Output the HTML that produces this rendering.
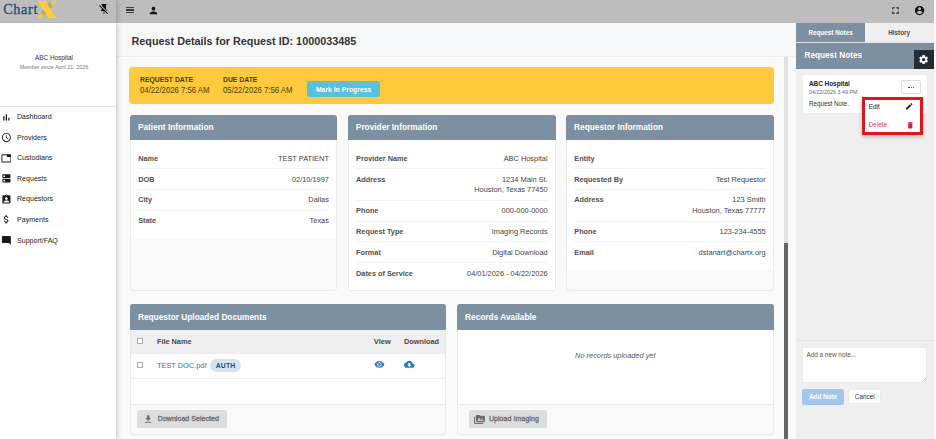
<!DOCTYPE html>
<html lang="en">
<head>
<meta charset="utf-8">
<title>ChartX - Request Details</title>
<style>
*{box-sizing:border-box;margin:0;padding:0}
html,body{width:936px;height:439px;overflow:hidden;background:#fff}
body{font-family:"Liberation Sans",sans-serif;color:#333;position:relative;font-size:8px}
.abs{position:absolute}
.t{white-space:nowrap;line-height:1}
#topbar{left:0;top:0;width:934px;height:22.8px;background:#bdbdbd}
#sidebar{left:0;top:22.8px;width:116px;height:416.2px;background:#fff;box-shadow:1px 0 5px rgba(0,0,0,.24);clip-path:inset(0 -10px 0 0)}
#sidehead{left:0;top:0;width:116px;height:22.8px;background:#bdbdbd;box-shadow:1px 0 5px rgba(0,0,0,.24);clip-path:inset(0 -10px 0 0)}
#main{left:116px;top:23px;width:680px;height:416px;background:#fafafa}
.card{background:#f9f9f9;border:1px solid #e9ebed;border-radius:3px}
.chead{left:-1px;top:-1px;right:-1px;background:#7d90a1;border-radius:3px 3px 0 0}
.white{background:#fff}

</style>
</head>
<body>
<div class="abs" id="topbar"></div>
<div class="abs" id="main"></div>
<div class="abs" style="left:116px;top:23px;width:680px;height:33.4px;background:#f7f8fa;"></div>
<div class="abs" style="left:116px;top:56.2px;width:680px;height:1px;background:#eceef0;"></div>
<div class="abs" id="sidebar"></div>
<div class="abs" id="sidehead"></div>
<div class="abs t" style="top:2px;font-size:14.3px;color:#1f506d;font-family:'Liberation Serif',serif;left:3.2px;letter-spacing:0.62px;-webkit-text-stroke:0.3px #1f506d;">Chart</div>
<svg class="abs" style="left:30px;top:0" width="40" height="22" viewBox="0 0 40 22"><defs><linearGradient id="xg" gradientUnits="userSpaceOnUse" x1="-0.3" y1="-2.58" x2="16.76" y2="-13.02"><stop offset="0" stop-color="#ffcb3d"/><stop offset=".08" stop-color="#ffcb3d"/><stop offset=".36" stop-color="#8f9c98"/><stop offset=".64" stop-color="#8f9c98"/><stop offset=".92" stop-color="#ffcb3d"/><stop offset="1" stop-color="#ffcb3d"/></linearGradient></defs><text x="0" y="0" transform="translate(8.25,17.2) scale(1.065,1)" font-family="DejaVu Sans, Liberation Sans, sans-serif" font-weight="bold" font-size="21" fill="url(#xg)" stroke="url(#xg)" stroke-width="1.5" text-rendering="geometricPrecision">X</text></svg>
<div class="abs" style="left:43.1px;top:1px;width:7.8px;height:16.8px;background:#ffcb3d;transform:skewX(34.2deg)"></div>
<svg class="abs" style="left:97.9px;top:2.9px" width="12" height="12" viewBox="0 0 24 24"><path fill="#111" d="M2,5.27L3.28,4L20,20.72L18.73,22L12.8,16.07V22H11.2V16H6V14L8,12V11.27L2,5.27M16,12L18,14V16H17.82L8,6.18V4H7V2H17V4H16V12Z"/></svg>
<div class="abs" style="left:125.9px;top:6.9px;width:8.2px;height:1.2px;background:#3c3c3c;"></div>
<div class="abs" style="left:125.9px;top:9.36px;width:8.2px;height:1.2px;background:#3c3c3c;"></div>
<div class="abs" style="left:125.9px;top:11.82px;width:8.2px;height:1.2px;background:#3c3c3c;"></div>
<svg class="abs" style="left:147.55px;top:4.7px" width="11" height="11" viewBox="0 0 24 24"><path fill="#111" d="M12 12c2.21 0 4-1.79 4-4s-1.79-4-4-4-4 1.79-4 4 1.79 4 4 4zm0 2c-2.67 0-8 1.34-8 4v2h16v-2c0-2.66-5.33-4-8-4z"/></svg>
<svg class="abs" style="left:890px;top:5.0px" width="11" height="11" viewBox="0 0 24 24"><path fill="#111" d="M7 14H5v5h5v-2H7v-3zm-2-4h2V7h3V5H5v5zm12 7h-3v2h5v-5h-2v3zM14 5v2h3v3h2V5h-5z"/></svg>
<svg class="abs" style="left:913.5px;top:4.7px" width="11.2" height="11.2" viewBox="0 0 24 24"><path fill="#111" d="M12 2C6.48 2 2 6.48 2 12s4.48 10 10 10 10-4.48 10-10S17.52 2 12 2zm0 3c1.66 0 3 1.34 3 3s-1.34 3-3 3-3-1.34-3-3 1.34-3 3-3zm0 14.2c-2.5 0-4.71-1.28-6-3.22.03-1.99 4-3.08 6-3.08 1.99 0 5.97 1.09 6 3.08-1.29 1.94-3.5 3.22-6 3.22z"/></svg>
<div class="abs t" style="top:55px;font-size:6.76px;color:#333;left:-146px;width:400px;text-align:center;transform:scaleX(0.945);transform-origin:50% 50%;">ABC Hospital</div>
<div class="abs t" style="top:65px;font-size:5.74px;color:#777;left:-146px;width:400px;text-align:center;transform:scaleX(0.945);transform-origin:50% 50%;">Member since April 21, 2026</div>
<div class="abs" style="left:0px;top:105.7px;width:116px;height:1px;background:#e4e4e4;"></div>
<div class="abs t" style="top:113px;font-size:7.52px;color:#222;left:16.8px;transform:scaleX(0.94);transform-origin:0 50%;">Dashboard</div>
<svg class="abs" style="left:0.5px;top:111.5px" width="10.8" height="10.8" viewBox="0 0 24 24"><path fill="#1a1a1a" d="M5 9.2h3V19H5V9.2zM10.6 5h2.8v14h-2.8V5zm5.6 8H19v6h-2.8v-6z"/></svg>
<div class="abs t" style="top:134px;font-size:7.52px;color:#222;left:16.8px;transform:scaleX(0.94);transform-origin:0 50%;">Providers</div>
<svg class="abs" style="left:0.5px;top:132.08px" width="10.8" height="10.8" viewBox="0 0 24 24"><path fill="#1a1a1a" d="M11.99 2C6.47 2 2 6.48 2 12s4.47 10 9.99 10C17.52 22 22 17.52 22 12S17.52 2 11.99 2zM12 20c-4.42 0-8-3.58-8-8s3.58-8 8-8 8 3.58 8 8-3.58 8-8 8zm.5-13H11v6l5.25 3.15.75-1.23-4.5-2.67z"/></svg>
<div class="abs t" style="top:154px;font-size:7.52px;color:#222;left:16.8px;transform:scaleX(0.94);transform-origin:0 50%;">Custodians</div>
<svg class="abs" style="left:0.5px;top:152.66px" width="10.8" height="10.8" viewBox="0 0 24 24"><path fill="#1a1a1a" d="M21 3H3c-1.1 0-2 .9-2 2v14c0 1.1.9 2 2 2h18c1.1 0 2-.9 2-2V5c0-1.1-.9-2-2-2zm0 16H3V5h10v4h8v10z"/></svg>
<div class="abs t" style="top:175px;font-size:7.52px;color:#222;left:16.8px;transform:scaleX(0.94);transform-origin:0 50%;">Requests</div>
<svg class="abs" style="left:0.5px;top:173.24px" width="10.8" height="10.8" viewBox="0 0 24 24"><path fill="#1a1a1a" d="M20 13H4c-.55 0-1 .45-1 1v6c0 .55.45 1 1 1h16c.55 0 1-.45 1-1v-6c0-.55-.45-1-1-1zM7 19c-1.1 0-2-.9-2-2s.9-2 2-2 2 .9 2 2-.9 2-2 2zM20 3H4c-.55 0-1 .45-1 1v6c0 .55.45 1 1 1h16c.55 0 1-.45 1-1V4c0-.55-.45-1-1-1zM7 9c-1.1 0-2-.9-2-2s.9-2 2-2 2 .9 2 2-.9 2-2 2z"/></svg>
<div class="abs t" style="top:195px;font-size:7.52px;color:#222;left:16.8px;transform:scaleX(0.94);transform-origin:0 50%;">Requestors</div>
<svg class="abs" style="left:0.5px;top:193.82px" width="10.8" height="10.8" viewBox="0 0 24 24"><path fill="#1a1a1a" d="M19 3h-4.18C14.4 1.84 13.3 1 12 1c-1.3 0-2.4.84-2.82 2H5c-1.1 0-2 .9-2 2v14c0 1.1.9 2 2 2h14c1.1 0 2-.9 2-2V5c0-1.1-.9-2-2-2zm-7 0c.55 0 1 .45 1 1s-.45 1-1 1-1-.45-1-1 .45-1 1-1zm0 4c1.66 0 3 1.34 3 3s-1.34 3-3 3-3-1.34-3-3 1.34-3 3-3zm6 12H6v-1.4c0-2 4-3.1 6-3.1s6 1.1 6 3.1V19z"/></svg>
<div class="abs t" style="top:216px;font-size:7.52px;color:#222;left:16.8px;transform:scaleX(0.94);transform-origin:0 50%;">Payments</div>
<svg class="abs" style="left:0.5px;top:214.4px" width="10.8" height="10.8" viewBox="0 0 24 24"><path fill="#1a1a1a" d="M11.8 10.9c-2.27-.59-3-1.2-3-2.15 0-1.09 1.01-1.85 2.7-1.85 1.78 0 2.44.85 2.5 2.1h2.21c-.07-1.72-1.12-3.3-3.21-3.81V3h-3v2.16c-1.94.42-3.5 1.68-3.5 3.61 0 2.31 1.91 3.46 4.7 4.13 2.5.6 3 1.48 3 2.41 0 .69-.49 1.79-2.7 1.79-2.06 0-2.87-.92-2.98-2.1h-2.2c.12 2.19 1.76 3.42 3.68 3.83V21h3v-2.15c1.95-.37 3.5-1.5 3.5-3.55 0-2.84-2.43-3.81-4.7-4.4z"/></svg>
<div class="abs t" style="top:237px;font-size:7.52px;color:#222;left:16.8px;transform:scaleX(0.94);transform-origin:0 50%;">Support/FAQ</div>
<svg class="abs" style="left:0.5px;top:234.98px" width="10.8" height="10.8" viewBox="0 0 24 24"><path fill="#1a1a1a" d="M21.99 4c0-1.1-.89-2-1.99-2H4c-1.1 0-2 .9-2 2v12c0 1.1.9 2 2 2h14l4 4-.01-18z"/></svg>
<div class="abs t" style="top:36px;font-size:10.82px;color:#353535;font-weight:bold;left:131.5px;">Request Details for Request ID: 1000033485</div>
<div class="abs" style="left:783.9px;top:57.2px;width:3.9px;height:382px;background:#e2e2e2;"></div>
<div class="abs" style="left:783.9px;top:242.7px;width:3.9px;height:197px;background:#666;"></div>
<div class="abs" style="left:129.1px;top:66.85px;width:645px;height:36.9px;background:#ffca3e;border-radius:3px"></div>
<div class="abs t" style="top:76px;font-size:7.51px;color:#4a3a08;font-weight:bold;left:139.7px;transform:scaleX(0.91);transform-origin:0 50%;">REQUEST DATE</div>
<div class="abs t" style="top:86px;font-size:8.94px;color:#4a3a08;left:139.7px;transform:scaleX(0.87);transform-origin:0 50%;">04/22/2026 7:56 AM</div>
<div class="abs t" style="top:76px;font-size:7.51px;color:#4a3a08;font-weight:bold;left:223px;transform:scaleX(0.91);transform-origin:0 50%;">DUE DATE</div>
<div class="abs t" style="top:86px;font-size:8.94px;color:#4a3a08;left:223px;transform:scaleX(0.87);transform-origin:0 50%;">05/22/2026 7:56 AM</div>
<div class="abs" style="left:306.7px;top:80.9px;width:73.5px;height:15.9px;background:#5bc0de;border-radius:2px"></div>
<div class="abs t" style="top:87px;font-size:6.83px;color:#fff;font-weight:bold;left:143.6px;width:400px;text-align:center;">Mark In Progress</div>
<div class="abs card" style="left:129.9px;top:114.5px;width:207.2px;height:176.9px"><div class="abs white" style="left:0;right:0;top:24.5px;height:98.9px;"></div><div class="abs chead" style="height:25.5px"></div></div>
<div class="abs t" style="top:123px;font-size:8.3px;color:#fff;font-weight:bold;left:137.95000000000002px;">Patient Information</div>
<div class="abs card" style="left:347.8px;top:114.5px;width:208px;height:176.9px"><div class="abs white" style="left:0;right:0;top:24.5px;height:150.4px;border-radius:0 0 2px 2px;"></div><div class="abs chead" style="height:25.5px"></div></div>
<div class="abs t" style="top:123px;font-size:8.3px;color:#fff;font-weight:bold;left:355.85px;">Provider Information</div>
<div class="abs card" style="left:566px;top:114.5px;width:207.7px;height:176.9px"><div class="abs white" style="left:0;right:0;top:24.5px;height:130.3px;"></div><div class="abs chead" style="height:25.5px"></div></div>
<div class="abs t" style="top:123px;font-size:8.3px;color:#fff;font-weight:bold;left:574.05px;">Requestor Information</div>
<div class="abs t" style="top:155px;font-size:7.3px;color:#505050;font-weight:bold;left:138.2px;">Name</div>
<div class="abs t" style="top:155px;font-size:7.4px;color:#444;right:607.1px;">TEST PATIENT</div>
<div class="abs" style="left:138.2px;top:168.1px;width:190.7px;height:1px;background:#f2f3f4;"></div>
<div class="abs t" style="top:176px;font-size:7.3px;color:#505050;font-weight:bold;left:138.2px;">DOB</div>
<div class="abs t" style="top:176px;font-size:7.4px;color:#444;right:607.1px;">02/10/1997</div>
<div class="abs" style="left:138.2px;top:188.9px;width:190.7px;height:1px;background:#f2f3f4;"></div>
<div class="abs t" style="top:196px;font-size:7.3px;color:#505050;font-weight:bold;left:138.2px;">City</div>
<div class="abs t" style="top:196px;font-size:7.4px;color:#444;right:607.1px;">Dallas</div>
<div class="abs" style="left:138.2px;top:209.7px;width:190.7px;height:1px;background:#f2f3f4;"></div>
<div class="abs t" style="top:217px;font-size:7.3px;color:#505050;font-weight:bold;left:138.2px;">State</div>
<div class="abs t" style="top:217px;font-size:7.4px;color:#444;right:607.1px;">Texas</div>
<div class="abs t" style="top:155px;font-size:7.3px;color:#505050;font-weight:bold;left:356.1px;">Provider Name</div>
<div class="abs t" style="top:155px;font-size:7.4px;color:#444;right:388.4px;">ABC Hospital</div>
<div class="abs" style="left:356.1px;top:168.1px;width:191.5px;height:1px;background:#f2f3f4;"></div>
<div class="abs t" style="top:176px;font-size:7.3px;color:#505050;font-weight:bold;left:356.1px;">Address</div>
<div class="abs t" style="top:176px;font-size:7.4px;color:#444;right:388.4px;">1234 Main St.</div>
<div class="abs t" style="top:186px;font-size:7.4px;color:#444;right:388.4px;">Houston, Texas 77450</div>
<div class="abs" style="left:356.1px;top:199.7px;width:191.5px;height:1px;background:#f2f3f4;"></div>
<div class="abs t" style="top:207px;font-size:7.3px;color:#505050;font-weight:bold;left:356.1px;">Phone</div>
<div class="abs t" style="top:207px;font-size:7.4px;color:#444;right:388.4px;">000-000-0000</div>
<div class="abs" style="left:356.1px;top:220.5px;width:191.5px;height:1px;background:#f2f3f4;"></div>
<div class="abs t" style="top:228px;font-size:7.3px;color:#505050;font-weight:bold;left:356.1px;">Request Type</div>
<div class="abs t" style="top:228px;font-size:7.4px;color:#444;right:388.4px;">Imaging Records</div>
<div class="abs" style="left:356.1px;top:241.3px;width:191.5px;height:1px;background:#f2f3f4;"></div>
<div class="abs t" style="top:249px;font-size:7.3px;color:#505050;font-weight:bold;left:356.1px;">Format</div>
<div class="abs t" style="top:249px;font-size:7.4px;color:#444;right:388.4px;">Digital Download</div>
<div class="abs" style="left:356.1px;top:262.1px;width:191.5px;height:1px;background:#f2f3f4;"></div>
<div class="abs t" style="top:270px;font-size:7.3px;color:#505050;font-weight:bold;left:356.1px;">Dates of Service</div>
<div class="abs t" style="top:270px;font-size:7.4px;color:#444;right:388.4px;">04/01/2026 - 04/22/2026</div>
<div class="abs t" style="top:155px;font-size:7.3px;color:#505050;font-weight:bold;left:574.3px;">Entity</div>
<div class="abs" style="left:574.3px;top:168.1px;width:191.30000000000007px;height:1px;background:#f2f3f4;"></div>
<div class="abs t" style="top:176px;font-size:7.3px;color:#505050;font-weight:bold;left:574.3px;">Requested By</div>
<div class="abs t" style="top:176px;font-size:7.4px;color:#444;right:170.4px;">Test Requestor</div>
<div class="abs" style="left:574.3px;top:188.9px;width:191.30000000000007px;height:1px;background:#f2f3f4;"></div>
<div class="abs t" style="top:196px;font-size:7.3px;color:#505050;font-weight:bold;left:574.3px;">Address</div>
<div class="abs t" style="top:196px;font-size:7.4px;color:#444;right:170.4px;">123 Smith</div>
<div class="abs t" style="top:207px;font-size:7.4px;color:#444;right:170.4px;">Houston, Texas 77777</div>
<div class="abs" style="left:574.3px;top:220.5px;width:191.30000000000007px;height:1px;background:#f2f3f4;"></div>
<div class="abs t" style="top:228px;font-size:7.3px;color:#505050;font-weight:bold;left:574.3px;">Phone</div>
<div class="abs t" style="top:228px;font-size:7.4px;color:#444;right:170.4px;">123-234-4555</div>
<div class="abs" style="left:574.3px;top:241.3px;width:191.30000000000007px;height:1px;background:#f2f3f4;"></div>
<div class="abs t" style="top:249px;font-size:7.3px;color:#505050;font-weight:bold;left:574.3px;">Email</div>
<div class="abs t" style="top:249px;font-size:7.4px;color:#444;right:170.4px;">dstanart@chartx.org</div>
<div class="abs card" style="left:129.9px;top:304.3px;width:316.3px;height:130.6px"><div class="abs white" style="left:0;right:0;top:24.9px;height:0px;"></div><div class="abs chead" style="height:25.9px"></div></div>
<div class="abs t" style="top:313px;font-size:8.3px;color:#fff;font-weight:bold;left:137.95000000000002px;">Requestor Uploaded Documents</div>
<div class="abs" style="left:130.9px;top:330.2px;width:314.3px;height:23.6px;background:#efefef;"></div>
<div class="abs" style="left:130.9px;top:353.8px;width:314.3px;height:50.3px;background:#fff;"></div>
<div class="abs" style="left:130.9px;top:378px;width:314.3px;height:1px;background:#eef0f1;"></div>
<div class="abs" style="left:130.9px;top:404.1px;width:314.3px;height:1px;background:#e9e9ec;"></div>
<div class="abs" style="left:137px;top:338.4px;width:6px;height:6px;background:#fff;border:0.8px solid #ababab;border-radius:0.5px"></div>
<div class="abs" style="left:137px;top:362.4px;width:6px;height:6px;background:#fff;border:0.8px solid #ababab;border-radius:0.5px"></div>
<div class="abs t" style="top:338px;font-size:7.3px;color:#484848;font-weight:bold;left:157px;">File Name</div>
<div class="abs t" style="top:338px;font-size:7.52px;color:#484848;font-weight:bold;left:373.8px;">View</div>
<div class="abs t" style="top:338px;font-size:7.33px;color:#484848;font-weight:bold;left:404px;">Download</div>
<div class="abs t" style="top:362px;font-size:7.38px;color:#2f73b5;left:157px;">TEST DOC.pdf</div>
<div class="abs" style="left:210px;top:359.2px;width:31.2px;height:12.9px;background:#d5e3f1;border-radius:7px"></div>
<div class="abs t" style="top:363px;font-size:6.8px;color:#1f4e79;font-weight:bold;letter-spacing:0.03em;left:25.6px;width:400px;text-align:center;">AUTH</div>
<svg class="abs" style="left:373.9px;top:359.3px" width="10.8" height="10.8" viewBox="0 0 24 24"><path fill="#2b77c2" d="M12 4.5C7 4.5 2.73 7.61 1 12c1.73 4.39 6 7.5 11 7.5s9.27-3.11 11-7.5c-1.73-4.39-6-7.5-11-7.5zM12 17c-2.76 0-5-2.24-5-5s2.24-5 5-5 5 2.24 5 5-2.24 5-5 5zm0-8c-1.66 0-3 1.34-3 3s1.34 3 3 3 3-1.34 3-3-1.34-3-3-3z"/></svg>
<svg class="abs" style="left:404.2px;top:358.8px" width="10.6" height="10.6" viewBox="0 0 24 24"><path fill="#2b77c2" d="M19.35 10.04C18.67 6.59 15.64 4 12 4 9.11 4 6.6 5.64 5.35 8.04 2.34 8.36 0 10.91 0 14c0 3.31 2.69 6 6 6h13c2.76 0 5-2.24 5-5 0-2.64-2.05-4.78-4.65-4.96zM17 13l-5 5-5-5h3V9h4v4h3z"/></svg>
<div class="abs" style="left:137.4px;top:410.2px;width:89.6px;height:17.8px;background:#dcdddd;border-radius:2px"></div>
<svg class="abs" style="left:143.2px;top:413.9px" width="10.4" height="10.4" viewBox="0 0 24 24"><path fill="#727272" d="M19 9h-4V3H9v6H5l7 7 7-7zM5 18v2h14v-2H5z"/></svg>
<div class="abs t" style="top:416px;font-size:6.96px;color:#727272;letter-spacing:0.01em;left:157.8px;-webkit-text-stroke:0.35px #727272;">Download Selected</div>
<div class="abs card" style="left:457px;top:304.3px;width:316.7px;height:130.6px"><div class="abs white" style="left:0;right:0;top:24.9px;height:0px;"></div><div class="abs chead" style="height:25.9px"></div></div>
<div class="abs t" style="top:313px;font-size:8.3px;color:#fff;font-weight:bold;left:465.05px;">Records Available</div>
<div class="abs" style="left:458px;top:330.2px;width:314.7px;height:73.9px;background:#fff;"></div>
<div class="abs" style="left:458px;top:404.1px;width:314.7px;height:1px;background:#e9e9ec;"></div>
<div class="abs t" style="top:352px;font-size:7.38px;color:#595959;font-style:italic;left:415.3px;width:400px;text-align:center;">No records uploaded yet</div>
<div class="abs" style="left:468.6px;top:410.2px;width:78.5px;height:17.7px;background:#dcdddd;border-radius:2px"></div>
<svg class="abs" style="left:474px;top:413.7px" width="10.9" height="10.9" viewBox="0 0 24 24"><path fill="#6e6e6e" d="M2 6H0v5h.01L0 20c0 1.1.9 2 2 2h18v-2H2V6zm20-2h-8l-2-2H6c-1.1 0-1.99.9-1.99 2L4 16c0 1.1.9 2 2 2h16c1.1 0 2-.9 2-2V6c0-1.1-.9-2-2-2zM7 15l4.5-6 3.5 4.51 2.5-3.01L21 15H7z"/></svg>
<div class="abs t" style="top:415px;font-size:7.0px;color:#727272;letter-spacing:0.01em;left:488.9px;-webkit-text-stroke:0.35px #727272;">Upload Imaging</div>
<div class="abs" style="left:796.1px;top:22.8px;width:137.6px;height:416.2px;background:#efefef;"></div>
<div class="abs" style="left:933.7px;top:0px;width:2.3px;height:439px;background:#fdf8fb;"></div>
<div class="abs" style="left:796.1px;top:22.8px;width:69px;height:19.3px;background:#7d90a1;"></div>
<div class="abs" style="left:796.1px;top:42.1px;width:137.6px;height:1px;background:#e3e6e9;"></div>
<div class="abs t" style="top:30px;font-size:6.34px;color:#fff;font-weight:bold;left:630.6px;width:400px;text-align:center;">Request Notes</div>
<div class="abs t" style="top:30px;font-size:6.3px;color:#4a4a4a;font-weight:bold;left:699.1px;width:400px;text-align:center;">History</div>
<div class="abs" style="left:796.1px;top:43.1px;width:137.6px;height:25.8px;background:#7d90a1;"></div>
<div class="abs t" style="top:52px;font-size:8.23px;color:#fff;font-weight:bold;left:804.5px;">Request Notes</div>
<div class="abs" style="left:914px;top:50px;width:19.7px;height:18.9px;background:#252b33;"></div>
<svg class="abs" style="left:917.8px;top:53.9px" width="11.2" height="11.2" viewBox="0 0 24 24"><path fill="#fff" d="M19.14 12.94c.04-.3.06-.61.06-.94 0-.32-.02-.64-.07-.94l2.03-1.58c.18-.14.23-.41.12-.61l-1.92-3.32c-.12-.22-.37-.29-.59-.22l-2.39.96c-.5-.38-1.03-.7-1.62-.94l-.36-2.54c-.04-.24-.24-.41-.48-.41h-3.84c-.24 0-.43.17-.47.41l-.36 2.54c-.59.24-1.13.57-1.62.94l-2.39-.96c-.22-.08-.47 0-.59.22L2.74 8.87c-.12.21-.08.47.12.61l2.03 1.58c-.05.3-.09.63-.09.94s.02.64.07.94l-2.03 1.58c-.18.14-.23.41-.12.61l1.92 3.32c.12.22.37.29.59.22l2.39-.96c.5.38 1.03.7 1.62.94l.36 2.54c.05.24.24.41.48.41h3.84c.24 0 .44-.17.47-.41l.36-2.54c.59-.24 1.13-.56 1.62-.94l2.39.96c.22.08.47 0 .59-.22l1.92-3.32c.12-.22.07-.47-.12-.61l-2.01-1.58zM12 15.6c-1.98 0-3.6-1.62-3.6-3.6s1.62-3.6 3.6-3.6 3.6 1.62 3.6 3.6-1.62 3.6-3.6 3.6z"/></svg>
<div class="abs" style="left:802.7px;top:75.1px;width:124.3px;height:37.9px;background:#fff;border-radius:2px"></div>
<div class="abs t" style="top:81px;font-size:6.42px;color:#222;font-weight:bold;left:808.9px;">ABC Hospital</div>
<div class="abs t" style="top:90px;font-size:5.41px;color:#5f6b7a;left:808.9px;">04/22/2026 3:49 PM</div>
<div class="abs t" style="top:101px;font-size:6.29px;color:#333;left:808.9px;">Request Note.</div>
<div class="abs" style="left:901.4px;top:80px;width:19.6px;height:14.3px;background:#fff;border:1px solid #dedede;border-radius:2px"></div>
<div class="abs" style="left:908.4px;top:86.7px;width:1.2px;height:1.2px;background:#333;border-radius:50%"></div>
<div class="abs" style="left:910.6px;top:86.7px;width:1.2px;height:1.2px;background:#333;border-radius:50%"></div>
<div class="abs" style="left:912.8px;top:86.7px;width:1.2px;height:1.2px;background:#333;border-radius:50%"></div>
<div class="abs" style="left:862px;top:96.9px;width:60.9px;height:38px;background:#fff;border:3px solid #e0161e;box-shadow:0 1.5px 4px rgba(0,0,0,.22)"></div>
<div class="abs t" style="top:104px;font-size:6.38px;color:#222;left:868.8px;">Edit</div>
<svg class="abs" style="left:905.3px;top:102.3px" width="8.5" height="8.5" viewBox="0 0 24 24"><path fill="#222" d="M3 17.25V21h3.75L17.81 9.94l-3.75-3.75L3 17.25zM20.71 7.04c.39-.39.39-1.02 0-1.41l-2.34-2.34c-.39-.39-1.02-.39-1.41 0l-1.83 1.83 3.75 3.75 1.83-1.83z"/></svg>
<div class="abs t" style="top:122px;font-size:6.33px;color:#d9364f;left:868.8px;">Delete</div>
<svg class="abs" style="left:905.5px;top:120.9px" width="8.5" height="8.5" viewBox="0 0 24 24"><path fill="#dc1f2e" d="M6 19c0 1.1.9 2 2 2h8c1.1 0 2-.9 2-2V7H6v12zM19 4h-3.5l-1-1h-5l-1 1H5v2h14V4z"/></svg>
<div class="abs" style="left:796.1px;top:340px;width:137.6px;height:1px;background:#e4e4e4;"></div>
<div class="abs" style="left:802.4px;top:346.5px;width:124.8px;height:36.3px;background:#fff;border:1px solid #ebebeb;border-radius:2px"></div>
<svg class="abs" style="left:921.5px;top:377px" width="5" height="5" viewBox="0 0 5 5"><path d="M0.5 4.5L4.5 0.5M2.5 4.5L4.5 2.5" stroke="#999" stroke-width="0.6" fill="none"/></svg>
<div class="abs t" style="top:352px;font-size:6.4px;color:#555;left:806.4px;">Add a new note...</div>
<div class="abs" style="left:802px;top:389.1px;width:42.1px;height:15.6px;background:#a5c6ea;border-radius:2px"></div>
<div class="abs t" style="top:394px;font-size:6.35px;color:#fff;font-weight:bold;left:623.1px;width:400px;text-align:center;">Add Note</div>
<div class="abs" style="left:847.5px;top:389.2px;width:33.9px;height:15.3px;background:#fff;border:1px solid #ebebeb;border-radius:2px"></div>
<div class="abs t" style="top:394px;font-size:6.39px;color:#333;left:664.75px;width:400px;text-align:center;">Cancel</div>
</body>
</html>
